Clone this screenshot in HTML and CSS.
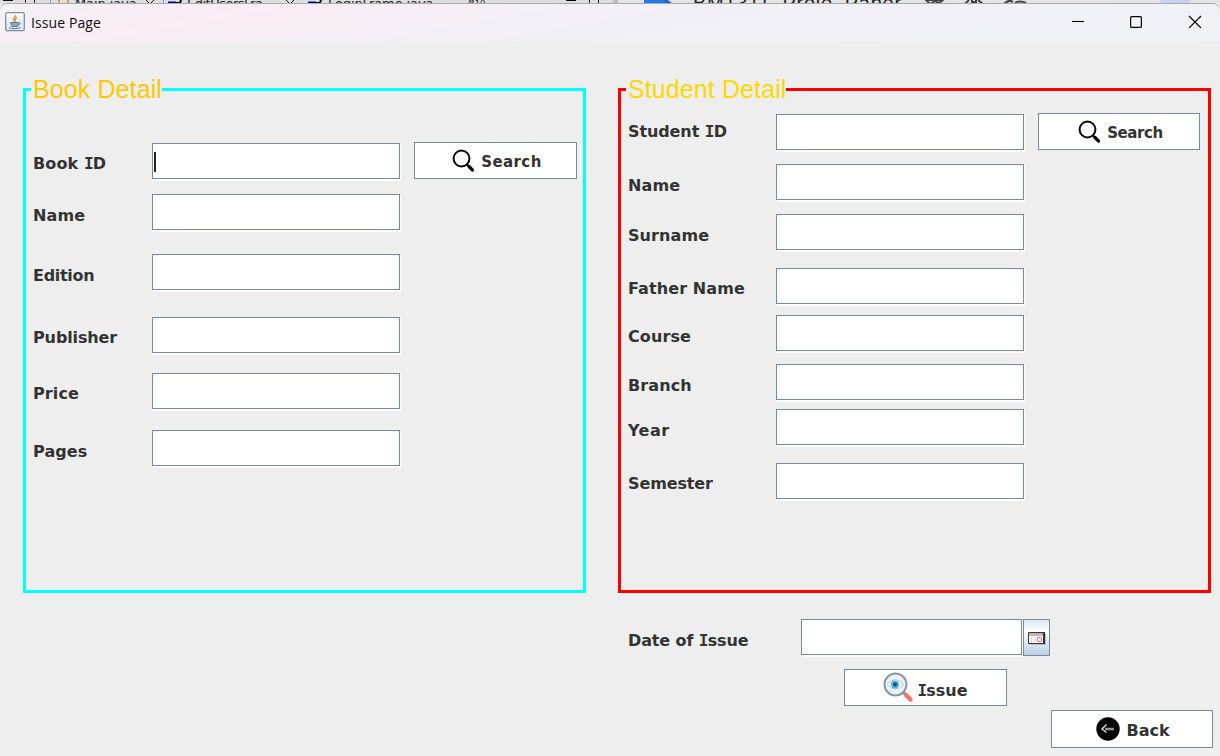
FILE: index.html
```html
<!DOCTYPE html>
<html lang="en">
<head>
<meta charset="utf-8">
<title>Issue Page</title>
<link rel="stylesheet" href="styles.css">
</head>
<body>
<svg width="0" height="0" class="defs">
  <symbol id="lens" viewBox="0 0 24 24">
    <circle cx="10.500" cy="9.500" r="7.900" fill="none" stroke="#080808" stroke-width="2"/>
    <path d="M15.500 15L18 17.500" stroke="#000" stroke-width="2.200"/>
    <path d="M18 17.500L21.500 21" stroke="#000" stroke-width="3.200" stroke-linecap="round"/>
  </symbol>
</svg>
<div class="desktop">
  <div class="backdrop" aria-hidden="true">
    <span class="ide">
      <i class="dash d1"></i><i class="tick t1"></i><i class="tick t2"></i>
      <span class="tab a">Main.java</span><span class="tab b">EditUsersFra...</span><span class="tab c">LoginFrame.java</span><span class="tab more">»₁₀</span>
      <svg class="marks" width="610" height="4"><path d="M50.500 0v4M163.500 0v4" stroke="#999"/><path d="M59 0v4M68 0v4" stroke="#c3a565" stroke-width="2"/><path d="M168 2.500h8M308 2.500h8" stroke="#000090" stroke-width="2"/><path d="M176 3h4l1-3M316 3h4l1-3" stroke="#000" fill="none" stroke-width="2"/><path d="M146 0l4 4 4-4M286 0l4 4 4-4M589.500 0v4M598.500 0v4M566 .500h10" stroke="#000" fill="none"/></svg>
    </span>
    <span class="browser">
      <svg class="corner" width="40" height="4"><path d="M0 0H24L29 4H0z" fill="#1967d2"/><path d="M0 0H20V4H0z" fill="#2478e8"/></svg>
      <span class="doc">BM1311_Proje_Paper</span>
      <svg class="tools" width="110" height="4"><path d="M2 0h17l-4 3-4-2-5 3zM41 4l4-4M48 0v2h4V0M54 0l5 4M80 4q5-5 9-2M91 3q5-3 11 0" fill="none" stroke="#444" stroke-width="2"/></svg>
      <i class="avatar"></i>
    </span>
  </div>
  <main class="window">
    <header class="titlebar">
      <svg class="java" width="20" height="20" viewBox="0 0 20 20">
        <defs><linearGradient id="tile" x2="0" y2="1"><stop stop-color="#fff"/><stop offset="1" stop-color="#dce3e9"/></linearGradient></defs>
        <rect x=".7" y=".7" width="18.600" height="18" rx="1.500" fill="url(#tile)" stroke="#7891a5" stroke-width="1.300"/>
        <path d="M10.500 3c1 2-3 3-2 4.500l1.500 2M12 5.500c-3 1-1 2.500-2 4" fill="none" stroke="#ed8d42" stroke-width="1.400"/>
        <path d="M5.500 10.500h8l-1 4H7z" fill="#8fabbd" stroke="#5b7f98"/><path d="M13.500 10.500c3-.5 2 2.500-.7 2.500M4 15.500c3 1.500 9 1.500 11.500 0" fill="none" stroke="#5b7f98"/>
      </svg>
      <h1>Issue Page</h1>
      <svg class="controls" width="130" height="14" viewBox="0 0 130 14">
        <path d="M0 6.500h12" stroke="#000" stroke-width="1.100"/>
        <rect x="58.600" y="1.600" width="10.800" height="10.800" rx="1" fill="none" stroke="#000" stroke-width="1.200"/>
        <path d="M117 1l12 12M129 1l-12 12" stroke="#000" stroke-width="1.200"/>
      </svg>
    </header>
    <div class="content">
      <section class="panel book">
        <h2>Book Detail</h2>
        <div class="row first"><label>Book <b>I</b>D</label><span class="field"><i class="caret"></i></span><button><svg width="24" height="24"><use href="#lens"/></svg><span class="wide">Search</span></button></div>
        <div class="row g15"><label class="low">Name</label><span class="field"></span></div>
        <div class="row g24"><label class="low tight">Edition</label><span class="field"></span></div>
        <div class="row g27"><label class="snug">Publisher</label><span class="field"></span></div>
        <div class="row g20"><label>Price</label><span class="field"></span></div>
        <div class="row g21"><label class="low">Pages</label><span class="field"></span></div>
      </section>
      <section class="panel student">
        <h2>Student Detail</h2>
        <div class="row first"><label class="up">Student <b>I</b>D</label><span class="field"></span><button><svg width="24" height="24"><use href="#lens"/></svg><span class="narrow">Search</span></button></div>
        <div class="row g14"><label class="low">Name</label><span class="field"></span></div>
        <div class="row g14"><label class="low">Surname</label><span class="field"></span></div>
        <div class="row g18"><label>Father Name</label><span class="field"></span></div>
        <div class="row g11"><label class="low">Course</label><span class="field"></span></div>
        <div class="row g13"><label class="low">Branch</label><span class="field"></span></div>
        <div class="row g9"><label class="low loose">Year</label><span class="field"></span></div>
        <div class="row g18"><label class="snug">Semester</label><span class="field"></span></div>
      </section>
    </div>
    <footer class="actions">
      <div class="date">
        <label>Date of <b>I</b>ssue</label><span class="field"></span>
        <button class="calendar" aria-label="Calendar"><svg width="20" height="16" viewBox="0 0 20 16"><path d="M2 4h17v11H2z" fill="#bbb"/><path d="M1.500 2.500h16v11h-16z" fill="#f5f5f5" stroke="#393939"/><path d="M2 3.500h6" stroke="#e5b55f"/><path d="M8 3.500h8" stroke="#9db4cf"/><path d="M2 5h15" stroke="#bbb" stroke-width="2"/><path d="M4.500 7v6M8 7v6" stroke="#d8d8d8"/><rect x="10.500" y="7.500" width="4" height="4" rx="1" fill="#fff" stroke="#df5c5c"/><path d="M17 2v12" stroke="#333" stroke-width="2"/></svg></button>
      </div>
      <button class="issue"><svg width="31" height="31" viewBox="0 0 31 31"><path d="M20 20l3 3" stroke="#8297a5" stroke-width="3"/><path d="M23 23l4.500 4.500" stroke="#f17669" stroke-width="4.500" stroke-linecap="round"/><circle cx="12.500" cy="12.500" r="11" fill="#eef2f4" stroke="#8799a5" stroke-width="2"/><path d="M4 12.500q8.500-10 17 0q-8.500 9-17 0" fill="#fff" stroke="#b7c5ce"/><circle cx="12" cy="12.500" r="4" fill="#45b3e6"/><circle cx="12" cy="12.500" r="2" fill="#174e70"/></svg><span><b>I</b>ssue</span></button>
      <button class="back"><svg width="24" height="24" viewBox="0 0 24 24"><circle cx="12" cy="12" r="11.700" fill="#000"/><path d="M9 12h9" stroke="#969696" stroke-width="2.500"/><path d="M10.500 7.500L6 12l4.500 3.500" fill="none" stroke="#d5d5d5" stroke-width="1.500"/></svg><span>Back</span></button>
    </footer>
  </main>
</div>
</body>
</html>
```
FILE: styles.css
```css
* { box-sizing: border-box; }
body { margin: 0; background: #eee; color: #333; font: bold 16px/20px "DejaVu Sans", sans-serif; overflow: hidden; }
.defs { display: none; }
.desktop { width: 1220px; height: 756px; display: flex; flex-direction: column; overflow: hidden; }
.backdrop { height: 4px; flex: none; display: flex; background: #d8d8d8; overflow: hidden; }
.ide { width: 618px; height: 4px; position: relative; border-right: 5px solid #bbb; background: #dedede; }
.browser { flex: 1; height: 4px; position: relative; background: #e3e3e3; }
.tab { position: absolute; top: -4px; font: 13px/16px "DejaVu Sans", sans-serif; color: #222; letter-spacing: -.1px; }
.tab.a { left: 75px; }
.tab.b { left: 187px; letter-spacing: -.5px; }
.tab.c { left: 328px; }
.tab.more { left: 467px; top: -7px; }
.dash, .tick, .marks, .corner, .doc, .tools, .avatar { position: absolute; top: 0; }
.dash { left: 3px; width: 10px; height: 1px; background: #111; }
.tick { left: 25px; width: 1px; height: 4px; background: #111; }
.tick.t2 { left: 34px; }
.marks { left: 0; }
.corner { left: 26px; }
.doc { left: 75px; top: -7px; font: 20px/21px "Liberation Sans", sans-serif; color: #222; letter-spacing: .75px; }
.tools { left: 306px; }
.avatar { left: 538px; top: -26px; width: 38px; height: 34px; border-radius: 50%; background: #c4d1f0; }
.window { flex: 1; display: flex; flex-direction: column; }
.titlebar { height: 37px; flex: none; display: flex; align-items: flex-start; position: relative; border-top-left-radius: 8px; border-top-right-radius: 8px; box-shadow: 0 -1px 0 #aaaab0; background: linear-gradient(170deg, #f5f0f8 0, #faedf5 20%, #f2f0f7 50%, #f0f2f8 100%); }
.java { margin: 8px 6px 0 5px; }
h1 { margin: 10px auto 0 0; color: #111; font: 14px/18px "Open Sans", sans-serif; letter-spacing: .1px; }
.controls { margin: 11px 18px 0 0; }
.content { display: grid; grid-template-columns: 563px 593px; column-gap: 32px; padding: 47px 0 0 23px; height: 552px; }
.panel { position: relative; height: 505px; border: 3px solid cyan; padding-left: 7px; }
.panel h2 { position: absolute; left: 5px; top: -16px; margin: 0; padding: 0 0 0 2px; background: #eee; font: 25px/28px "Liberation Sans", sans-serif; letter-spacing: .1px; white-space: nowrap; }
.book h2 { color: #ffc800; }
.student { border-color: red; }
.student h2 { color: #ffd700; }
.row { display: flex; height: 36px; position: relative; }
.book .first { margin-top: 52px; }
.student .first { margin-top: 23px; }
.g9 { margin-top: 9px; }
.g11 { margin-top: 11px; }
.g13 { margin-top: 13px; }
.g14 { margin-top: 14px; }
.g15 { margin-top: 15px; }
.g18 { margin-top: 18px; }
.g20 { margin-top: 20px; }
.g21 { margin-top: 21px; }
.g24 { margin-top: 24px; }
.g27 { margin-top: 27px; }
label { width: 119px; flex: none; padding-top: 11px; white-space: nowrap; letter-spacing: .1px; }
.student label { width: 148px; }
label.up { padding-top: 8px; letter-spacing: -.1px; }
label.low { padding-top: 12px; }
label.tight { letter-spacing: -.3px; }
label.snug { letter-spacing: -.12px; }
label.loose { letter-spacing: .5px; }
b { font-family: "DejaVu Sans Mono", monospace; letter-spacing: -.7px; }
.field { width: 248px; height: 36px; flex: none; background: #fff; border: 1px solid #7a8a99; box-shadow: 1px 1px 0 #fff, 1px 2px 0 #fff; }
.caret { display: block; width: 2px; height: 20px; margin: 8px 0 0 1px; background: #222; }
button { height: 37px; width: 163px; flex: none; display: flex; align-items: center; justify-content: center; gap: 6px; padding: 0; border: 1px solid #7a8a99; border-radius: 0; background: #fff; color: #333; font: inherit; }
.row button { margin: -1px 0 0 14px; padding-left: 2px; }
.student .row button { width: 162px; }
button span { padding-top: 1px; }
.row button span { padding-top: 2px; }
.wide { font-size: 15px; letter-spacing: .4px; }
.narrow { font-size: 15px; letter-spacing: -.4px; }
.actions { flex: 1; display: flex; flex-direction: column; padding-top: 26px; }
.date { display: flex; height: 37px; margin-left: 628px; }
.date label { width: 173px; padding-top: 12px; letter-spacing: -.12px; }
.date .field { width: 221px; }
.calendar { width: 27px; margin-left: 1px; background: linear-gradient(#dce7f2, #fff 35%, #b9cee5); }
.issue { margin: 13px 0 0 844px; gap: 3px; }
.issue span { padding-top: 6px; }
.back { width: 162px; height: 38px; margin: 4px 0 0 1051px; padding-left: 2px; }
.back span { padding-top: 4px; }
```
